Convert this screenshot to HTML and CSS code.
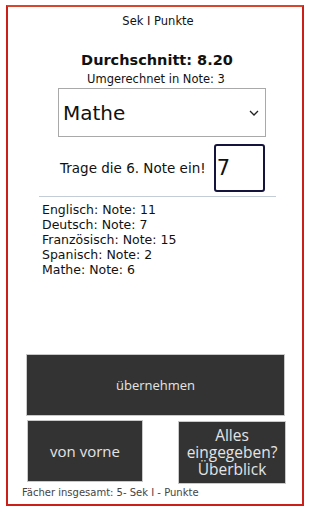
FILE: index.html
```html
<!DOCTYPE html>
<html lang="de">
<head>
<meta charset="utf-8">
<title>Sek I Punkte</title>
<link rel="stylesheet" href="styles.css">
</head>
<body>
<div class="frame">
  <div class="title">Sek I Punkte</div>
  <div class="avg">Durchschnitt: 8.20</div>
  <div class="conv">Umgerechnet in Note: 3</div>
  <select class="subject">
    <option>Mathe</option>
  </select>
  <div class="entry">
    <span class="entry-label">Trage die 6. Note ein!</span>
    <input class="entry-input" type="text" value="7">
  </div>
  <div class="rule"></div>
  <ul class="grades">
    <li>Englisch: Note: 11</li>
    <li>Deutsch: Note: 7</li>
    <li>Französisch: Note: 15</li>
    <li>Spanisch: Note: 2</li>
    <li>Mathe: Note: 6</li>
  </ul>
  <div class="spacer"></div>
  <button class="btn btn-wide">übernehmen</button>
  <div class="btn-row">
    <button class="btn btn-reset">von vorne</button>
    <button class="btn btn-overview">Alles eingegeben? Überblick</button>
  </div>
  <div class="footer">Fächer insgesamt: 5- Sek I - Punkte</div>
</div>
</body>
</html>
```
FILE: styles.css
```css
html, body {
  margin: 0;
  padding: 0;
  background: #fff;
}
body {
  font-family: "DejaVu Sans", Verdana, sans-serif;
  color: #111;
}
.frame {
  box-sizing: border-box;
  margin: 5px 0 0 6px;
  width: 298px;
  height: 501px;
  border: 2px solid #cc1f1a;
  border-top-color: #d9452c;
  display: flex;
  flex-direction: column;
}
.title {
  font-size: 11.5px;
  line-height: 15px;
  text-align: center;
  margin-top: 7px;
  padding-left: 6px;
}
.avg {
  font-size: 14.5px;
  font-weight: bold;
  line-height: 20px;
  text-align: center;
  margin-top: 21px;
  padding-left: 4px;
}
.conv {
  font-size: 11.5px;
  line-height: 15px;
  text-align: center;
  margin-top: 2px;
  padding-left: 2px;
}
.subject {
  -webkit-appearance: none;
  appearance: none;
  box-sizing: border-box;
  margin: 1px 0 0 50px;
  width: 208px;
  height: 49px;
  border: 1px solid #a9a9a9;
  border-radius: 0;
  background: #fff url("data:image/svg+xml;utf8,<svg xmlns='http://www.w3.org/2000/svg' width='10' height='6' viewBox='0 0 10 6'><path d='M1 1l4 4 4-4' fill='none' stroke='%23222' stroke-width='1.3'/></svg>") no-repeat right 6px center;
  font-family: "DejaVu Sans", Verdana, sans-serif;
  font-size: 20px;
  color: #111;
  padding: 0 0 0 4px;
}
.entry {
  display: flex;
  align-items: center;
  margin: 7px 0 0 52px;
}
.entry-label {
  font-size: 13.5px;
  margin-right: 8px;
}
.entry-input {
  box-sizing: border-box;
  width: 51px;
  height: 48px;
  border: 2px solid #14143c;
  border-radius: 3px;
  font-family: "DejaVu Sans", Verdana, sans-serif;
  font-size: 21px;
  padding: 0 0 0 1px;
  color: #111;
}
.rule {
  margin: 4px 0 0 31px;
  width: 237px;
  height: 1px;
  background: #c4ccd6;
}
.grades {
  list-style: none;
  margin: 5px 0 0 34px;
  padding: 0;
  font-size: 12.5px;
  line-height: 15px;
}
.spacer {
  flex: 1;
}
.btn {
  box-sizing: border-box;
  background: #333;
  color: #e4e4e4;
  border: 1px solid #c9c9c9;
  font-family: "Open Sans", "Noto Sans", sans-serif;
  padding: 0;
  cursor: pointer;
}
.btn-wide {
  margin-left: 18px;
  width: 259px;
  height: 62px;
  font-size: 13px;
}
.btn-row {
  display: flex;
  justify-content: space-between;
  margin: 4px 0 0 19px;
  width: 259px;
}
.btn-reset {
  width: 116px;
  height: 62px;
  font-size: 15px;
}
.btn-overview {
  margin-top: 1px;
  width: 108px;
  height: 63px;
  font-size: 15.5px;
  line-height: 17px;
}
.footer {
  font-size: 10px;
  line-height: 13px;
  color: #444;
  margin: 2px 0 5px 14px;
}
```
